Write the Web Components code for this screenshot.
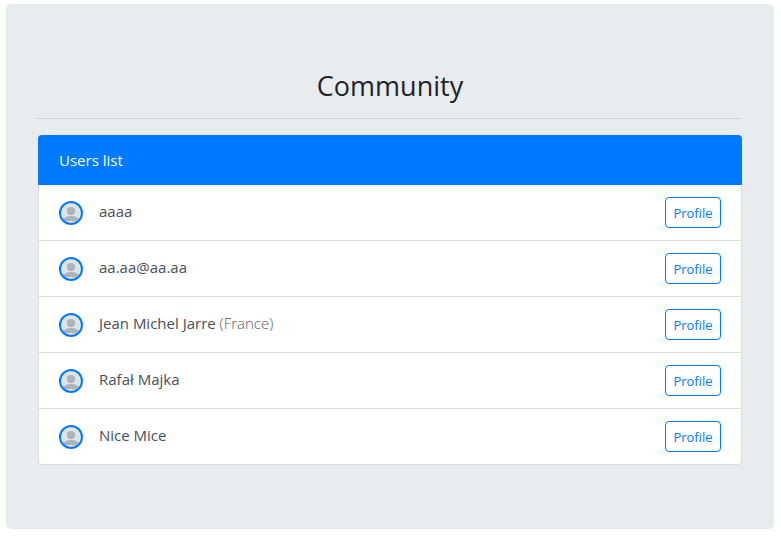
<!DOCTYPE html>
<html lang="en">
<head>
<meta charset="utf-8">
<meta name="viewport" content="width=device-width, initial-scale=1">
<title>Community</title>
<style>
  body { margin: 0; padding: 4px 7px 10px 6px; background: #fff; color: #212529;
    font: 15px/24px "Segoe UI", "Open Sans", "Noto Sans", sans-serif; }
</style>
</head>
<body>
<community-page>
  <span slot="title">Community</span>
  <users-card>
    <span slot="title">Users list</span>
    <user-row>aaaa</user-row>
    <user-row>aa.aa@aa.aa</user-row>
    <user-row>Jean Michel Jarre <span slot="country">(France)</span></user-row>
    <user-row>Rafał Majka</user-row>
    <user-row>Nice Mice</user-row>
  </users-card>
</community-page>

<template id="page-template">
  <style>
    :host { display: block; padding: 64px 32px; background: #e8ecef; border-radius: 5px; }
    h1 { margin: 0; font-size: 27px; line-height: 36px; font-weight: 400; text-align: center; }
    hr { margin: 14px 0 16px; border: 0; border-top: 1px solid #d0d3d6; }
  </style>
  <main>
    <h1><slot name="title"></slot></h1>
    <hr>
    <slot></slot>
  </main>
</template>

<template id="card-template">
  <style>
    :host { display: block; background: #fff; border: 1px solid #dcdddf; border-top: 0; border-radius: 4px; }
    h2 { margin: 0 -1px; padding: 13px 21px; background: #007bff; color: #fff; font-size: 15px;
      line-height: 24px; font-weight: 400; border-radius: 4px 4px 0 0; }
  </style>
  <section>
    <h2><slot name="title"></slot></h2>
    <div role="list"><slot></slot></div>
  </section>
</template>

<template id="row-template">
  <style>
    :host { display: flex; align-items: flex-start; gap: 16px; padding: 12px 20px; color: #495057;
      border-bottom: 1px solid #dcdddf; }
    :host(:last-of-type) { border-bottom: 0; }
    user-avatar { margin-top: 4px; }
    .name { flex: 1; padding-top: 2px; min-width: 0; }
    ::slotted([slot="country"]) { font-weight: 300; color: #596066; }
    button { box-sizing: border-box; min-width: 56px; height: 31px; padding: 2px 7px 0;
      border: 1px solid #007bff; border-radius: 4px; background: #fff; color: #007bff;
      font: inherit; font-size: 13px; line-height: 21px; cursor: pointer; }
    button:hover { background: #007bff; color: #fff; }
  </style>
  <user-avatar></user-avatar>
  <div class="name"><slot></slot><slot name="country"></slot></div>
  <button type="button">Profile</button>
</template>

<template id="avatar-template">
  <style>
    :host { display: block; flex: none; width: 24px; height: 24px; }
    svg { display: block; }
  </style>
  <svg width="24" height="24" viewBox="0 0 24 24" aria-hidden="true">
    <defs><clipPath id="disc"><circle cx="12" cy="12" r="10"/></clipPath></defs>
    <circle cx="12" cy="12" r="11" fill="#dfe3e5"/>
    <g clip-path="url(#disc)" fill="#adb3b7">
      <circle cx="12" cy="10" r="4"/>
      <path d="M3.500 20C4.500 16.700 7.500 15 12 15s7.500 1.700 8.500 5z"/>
    </g>
    <circle cx="12" cy="12" r="11" fill="none" stroke="#007bff" stroke-width="2"/>
  </svg>
</template>

<script>
  function define(name, templateId, role) {
    customElements.define(name, class extends HTMLElement {
      constructor() {
        super();
        this.attachShadow({ mode: "open" })
          .append(document.getElementById(templateId).content.cloneNode(true));
      }
      connectedCallback() {
        if (role) this.setAttribute("role", role);
      }
    });
  }
  define("user-avatar", "avatar-template");
  define("user-row", "row-template", "listitem");
  define("users-card", "card-template");
  define("community-page", "page-template");
</script>
</body>
</html>
